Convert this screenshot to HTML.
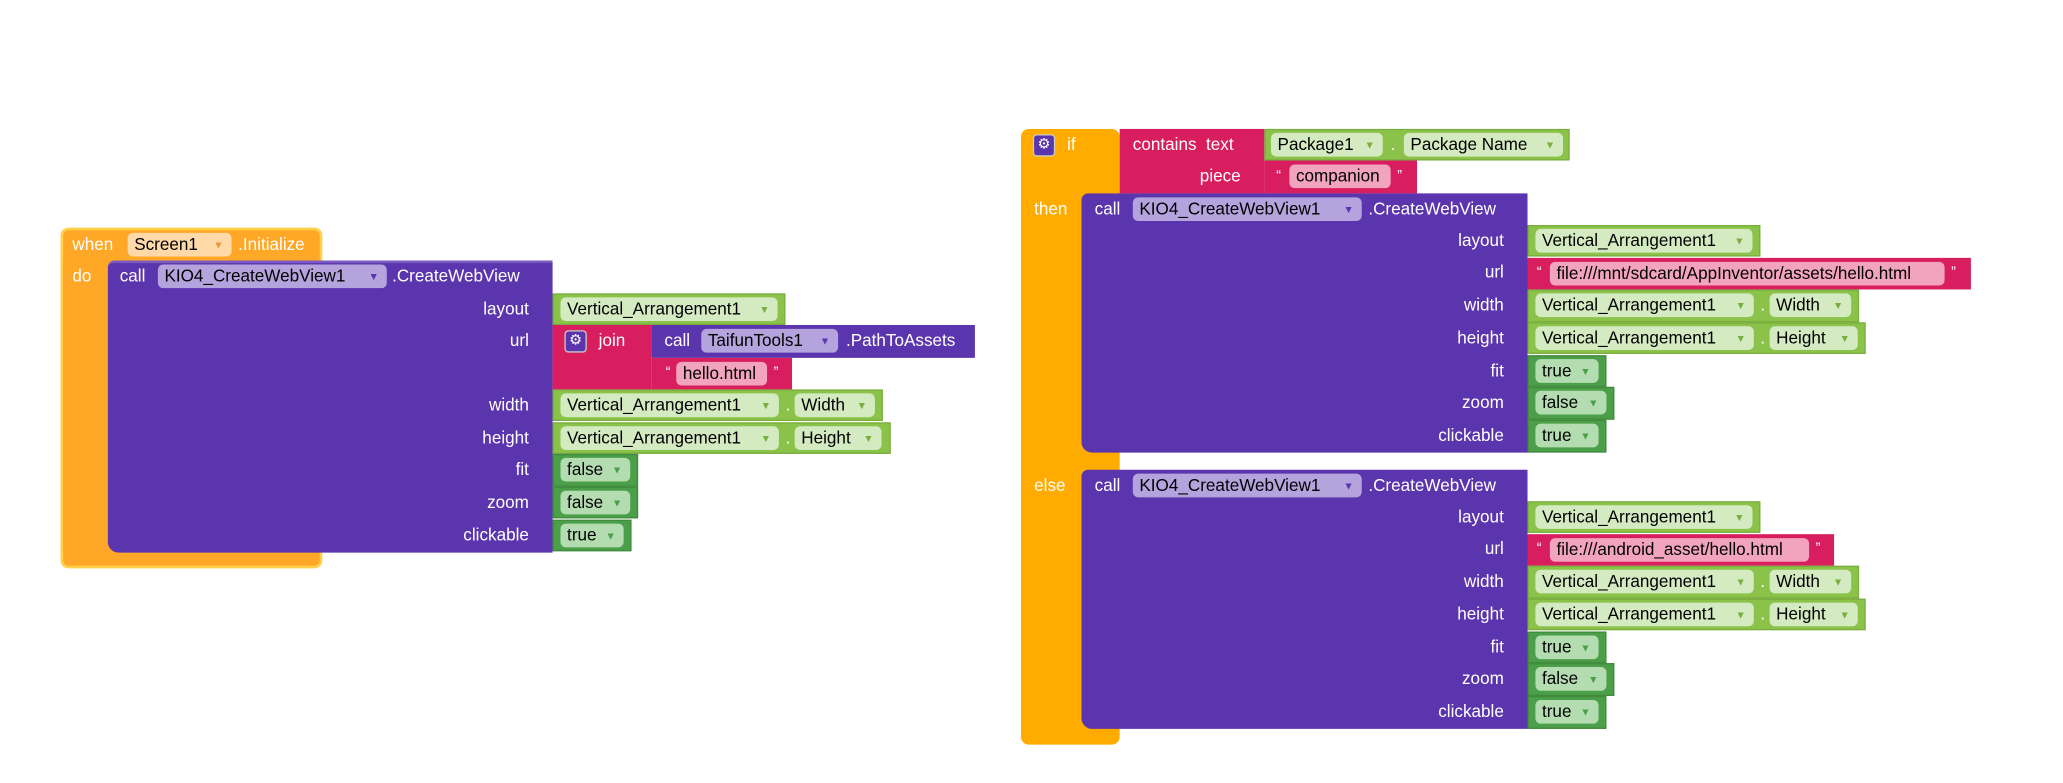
<!DOCTYPE html>
<html><head><meta charset="utf-8"><style>
html,body{margin:0;padding:0;background:#fff;overflow:hidden}
#w{position:absolute;left:0;top:0;width:1568px;height:595px;transform:scale(1.31569);transform-origin:0 0;font-family:"Liberation Sans",Arial,sans-serif;font-size:13px}
.b{position:absolute;box-sizing:border-box}
.t{position:absolute;color:#fff;line-height:16px;white-space:nowrap}
.r{text-align:right}
.c{position:absolute;line-height:18px;height:18px;border-radius:4px;color:#000;white-space:nowrap;padding-left:5px;box-sizing:border-box}
.c i{font-style:normal;font-size:8px;position:absolute;right:6px;top:1px}
.P{background:#5b35ad}.PC{background:#b4a3dd}
.G{background:#8bc34a;border:1px solid #7aae3f}.GC{background:#d4eac0}
.D{background:#4c9f49;border:1px solid #418b3e}.DC{background:#b4dcb1}
.K{background:#d81e5e}.KC{background:#f2a3bd}
.gear{position:absolute;width:15px;height:15px;background:#5b35ad;border:1px solid #ccb;border-radius:3px;color:#fff;font-size:11px;line-height:15px;text-align:center}
</style></head><body><div id="w">

<!-- LEFT when block -->
<div class="b" style="left:46px;top:173px;width:199px;height:259px;background:#ffa726;border:2px solid #ffd04a;border-radius:6px"></div>
<div class="b" style="left:48px;top:198px;width:196px;height:220px;background:#ffa726"></div>
<div class="t" style="left:55px;top:178px">when</div>
<div class="c" style="left:97px;top:177px;width:79px;background:#ffd9a8">Screen1<i style="color:#e89a30">▼</i></div>
<div class="t" style="left:181px;top:178px">.Initialize</div>
<div class="t" style="left:55px;top:202px">do</div>

<div class="b P" style="left:82px;top:198px;width:338px;height:222px;border-radius:5px 0 0 8px;border-top:2px solid #7a59c0"></div>
<div class="t" style="left:91px;top:202px">call</div>
<div class="c PC" style="left:120px;top:201px;width:174px">KIO4_CreateWebView1<i style="color:#5b35ad">▼</i></div>
<div class="t" style="left:298px;top:202px">.CreateWebView</div>
<div class="t r" style="left:300px;width:102px;top:227px">layout</div>
<div class="t r" style="left:300px;width:102px;top:251px">url</div>
<div class="t r" style="left:300px;width:102px;top:300px">width</div>
<div class="t r" style="left:300px;width:102px;top:325px">height</div>
<div class="t r" style="left:300px;width:102px;top:349px">fit</div>
<div class="t r" style="left:300px;width:102px;top:374px">zoom</div>
<div class="t r" style="left:300px;width:102px;top:399px">clickable</div>

<div class="b G" style="left:420px;top:223px;width:177px;height:24px"></div>
<div class="c GC" style="left:426px;top:226px;width:165px">Vertical_Arrangement1<i style="color:#7aae3f">▼</i></div>

<div class="b K" style="left:420px;top:247px;width:75px;height:49px"></div>
<div class="gear" style="left:429px;top:251px">⚙</div>
<div class="t" style="left:455px;top:251px">join</div>
<div class="b P" style="left:495px;top:247px;width:246px;height:25px"></div>
<div class="t" style="left:505px;top:251px">call</div>
<div class="c PC" style="left:533px;top:250px;width:104px">TaifunTools1<i style="color:#5b35ad">▼</i></div>
<div class="t" style="left:643px;top:251px">.PathToAssets</div>
<div class="b K" style="left:495px;top:272px;width:107px;height:24px"></div>
<div class="t" style="left:506px;top:275px;font-size:11px">“</div>
<div class="c KC" style="left:514px;top:275px;width:69px">hello.html</div>
<div class="t" style="left:588px;top:275px;font-size:11px">”</div>

<div class="b G" style="left:420px;top:296px;width:251px;height:24px"></div>
<div class="c GC" style="left:426px;top:299px;width:166px">Vertical_Arrangement1<i style="color:#7aae3f">▼</i></div>
<div class="t" style="left:597px;top:300px;color:#fff">.</div>
<div class="c GC" style="left:604px;top:299px;width:61px">Width<i style="color:#7aae3f">▼</i></div>

<div class="b G" style="left:420px;top:321px;width:257px;height:24px"></div>
<div class="c GC" style="left:426px;top:324px;width:166px">Vertical_Arrangement1<i style="color:#7aae3f">▼</i></div>
<div class="t" style="left:597px;top:325px">.</div>
<div class="c GC" style="left:604px;top:324px;width:66px">Height<i style="color:#7aae3f">▼</i></div>

<div class="b D" style="left:420px;top:345px;width:65px;height:25px"></div>
<div class="c DC" style="left:426px;top:348px;width:53px">false<i style="color:#4c9f49">▼</i></div>
<div class="b D" style="left:420px;top:370px;width:65px;height:24px"></div>
<div class="c DC" style="left:426px;top:373px;width:53px">false<i style="color:#4c9f49">▼</i></div>
<div class="b D" style="left:420px;top:395px;width:60px;height:24px"></div>
<div class="c DC" style="left:426px;top:398px;width:48px">true<i style="color:#4c9f49">▼</i></div>

<!-- RIGHT if block -->
<div class="b" style="left:776px;top:98px;width:75px;height:468px;background:#ffab00;border-radius:6px"></div>
<div class="gear" style="left:785px;top:102px">⚙</div>
<div class="t" style="left:811px;top:102px">if</div>
<div class="t" style="left:786px;top:151px">then</div>
<div class="t" style="left:786px;top:361px">else</div>

<div class="b K" style="left:851px;top:98px;width:110px;height:49px"></div>
<div class="t" style="left:861px;top:102px">contains&nbsp; text</div>
<div class="t r" style="left:880px;width:63px;top:126px">piece</div>
<div class="b G" style="left:961px;top:98px;width:232px;height:24px"></div>
<div class="c GC" style="left:966px;top:101px;width:85px">Package1<i style="color:#7aae3f">▼</i></div>
<div class="t" style="left:1057px;top:102px">.</div>
<div class="c GC" style="left:1067px;top:101px;width:121px">Package Name<i style="color:#7aae3f">▼</i></div>
<div class="b K" style="left:961px;top:122px;width:116px;height:25px"></div>
<div class="t" style="left:970px;top:126px;font-size:11px">“</div>
<div class="c KC" style="left:980px;top:125px;width:77px">companion</div>
<div class="t" style="left:1062px;top:126px;font-size:11px">”</div>

<!-- then call -->
<div class="b P" style="left:822px;top:147px;width:339px;height:197px;border-radius:5px 0 0 8px"></div>
<div class="t" style="left:832px;top:151px">call</div>
<div class="c PC" style="left:861px;top:150px;width:174px">KIO4_CreateWebView1<i style="color:#5b35ad">▼</i></div>
<div class="t" style="left:1040px;top:151px">.CreateWebView</div>
<div class="t r" style="left:1040px;width:103px;top:175px">layout</div>
<div class="t r" style="left:1040px;width:103px;top:199px">url</div>
<div class="t r" style="left:1040px;width:103px;top:224px">width</div>
<div class="t r" style="left:1040px;width:103px;top:249px">height</div>
<div class="t r" style="left:1040px;width:103px;top:274px">fit</div>
<div class="t r" style="left:1040px;width:103px;top:298px">zoom</div>
<div class="t r" style="left:1040px;width:103px;top:323px">clickable</div>
<div class="b G" style="left:1161px;top:171px;width:177px;height:24px"></div>
<div class="c GC" style="left:1167px;top:174px;width:165px">Vertical_Arrangement1<i style="color:#7aae3f">▼</i></div>
<div class="b K" style="left:1161px;top:196px;width:337px;height:24px"></div>
<div class="t" style="left:1168px;top:199px;font-size:11px">“</div>
<div class="c KC" style="left:1178px;top:199px;width:300px">file:///mnt/sdcard/AppInventor/assets/hello.html</div>
<div class="t" style="left:1483px;top:199px;font-size:11px">”</div>
<div class="b G" style="left:1161px;top:220px;width:252px;height:25px"></div>
<div class="c GC" style="left:1167px;top:223px;width:166px">Vertical_Arrangement1<i style="color:#7aae3f">▼</i></div>
<div class="t" style="left:1338px;top:224px">.</div>
<div class="c GC" style="left:1345px;top:223px;width:62px">Width<i style="color:#7aae3f">▼</i></div>
<div class="b G" style="left:1161px;top:245px;width:257px;height:24px"></div>
<div class="c GC" style="left:1167px;top:248px;width:166px">Vertical_Arrangement1<i style="color:#7aae3f">▼</i></div>
<div class="t" style="left:1338px;top:249px">.</div>
<div class="c GC" style="left:1345px;top:248px;width:67px">Height<i style="color:#7aae3f">▼</i></div>
<div class="b D" style="left:1161px;top:270px;width:60px;height:24px"></div>
<div class="c DC" style="left:1167px;top:273px;width:48px">true<i style="color:#4c9f49">▼</i></div>
<div class="b D" style="left:1161px;top:294px;width:66px;height:25px"></div>
<div class="c DC" style="left:1167px;top:297px;width:54px">false<i style="color:#4c9f49">▼</i></div>
<div class="b D" style="left:1161px;top:319px;width:60px;height:25px"></div>
<div class="c DC" style="left:1167px;top:322px;width:48px">true<i style="color:#4c9f49">▼</i></div>

<!-- else call -->
<div class="b P" style="left:822px;top:357px;width:339px;height:197px;border-radius:5px 0 0 8px"></div>
<div class="t" style="left:832px;top:361px">call</div>
<div class="c PC" style="left:861px;top:360px;width:174px">KIO4_CreateWebView1<i style="color:#5b35ad">▼</i></div>
<div class="t" style="left:1040px;top:361px">.CreateWebView</div>
<div class="t r" style="left:1040px;width:103px;top:385px">layout</div>
<div class="t r" style="left:1040px;width:103px;top:409px">url</div>
<div class="t r" style="left:1040px;width:103px;top:434px">width</div>
<div class="t r" style="left:1040px;width:103px;top:459px">height</div>
<div class="t r" style="left:1040px;width:103px;top:484px">fit</div>
<div class="t r" style="left:1040px;width:103px;top:508px">zoom</div>
<div class="t r" style="left:1040px;width:103px;top:533px">clickable</div>
<div class="b G" style="left:1161px;top:381px;width:177px;height:24px"></div>
<div class="c GC" style="left:1167px;top:384px;width:165px">Vertical_Arrangement1<i style="color:#7aae3f">▼</i></div>
<div class="b K" style="left:1161px;top:406px;width:233px;height:24px"></div>
<div class="t" style="left:1168px;top:409px;font-size:11px">“</div>
<div class="c KC" style="left:1178px;top:409px;width:197px">file:///android_asset/hello.html</div>
<div class="t" style="left:1380px;top:409px;font-size:11px">”</div>
<div class="b G" style="left:1161px;top:430px;width:252px;height:25px"></div>
<div class="c GC" style="left:1167px;top:433px;width:166px">Vertical_Arrangement1<i style="color:#7aae3f">▼</i></div>
<div class="t" style="left:1338px;top:434px">.</div>
<div class="c GC" style="left:1345px;top:433px;width:62px">Width<i style="color:#7aae3f">▼</i></div>
<div class="b G" style="left:1161px;top:455px;width:257px;height:24px"></div>
<div class="c GC" style="left:1167px;top:458px;width:166px">Vertical_Arrangement1<i style="color:#7aae3f">▼</i></div>
<div class="t" style="left:1338px;top:459px">.</div>
<div class="c GC" style="left:1345px;top:458px;width:67px">Height<i style="color:#7aae3f">▼</i></div>
<div class="b D" style="left:1161px;top:480px;width:60px;height:24px"></div>
<div class="c DC" style="left:1167px;top:483px;width:48px">true<i style="color:#4c9f49">▼</i></div>
<div class="b D" style="left:1161px;top:504px;width:66px;height:25px"></div>
<div class="c DC" style="left:1167px;top:507px;width:54px">false<i style="color:#4c9f49">▼</i></div>
<div class="b D" style="left:1161px;top:529px;width:60px;height:25px"></div>
<div class="c DC" style="left:1167px;top:532px;width:48px">true<i style="color:#4c9f49">▼</i></div>

</div></body></html>
